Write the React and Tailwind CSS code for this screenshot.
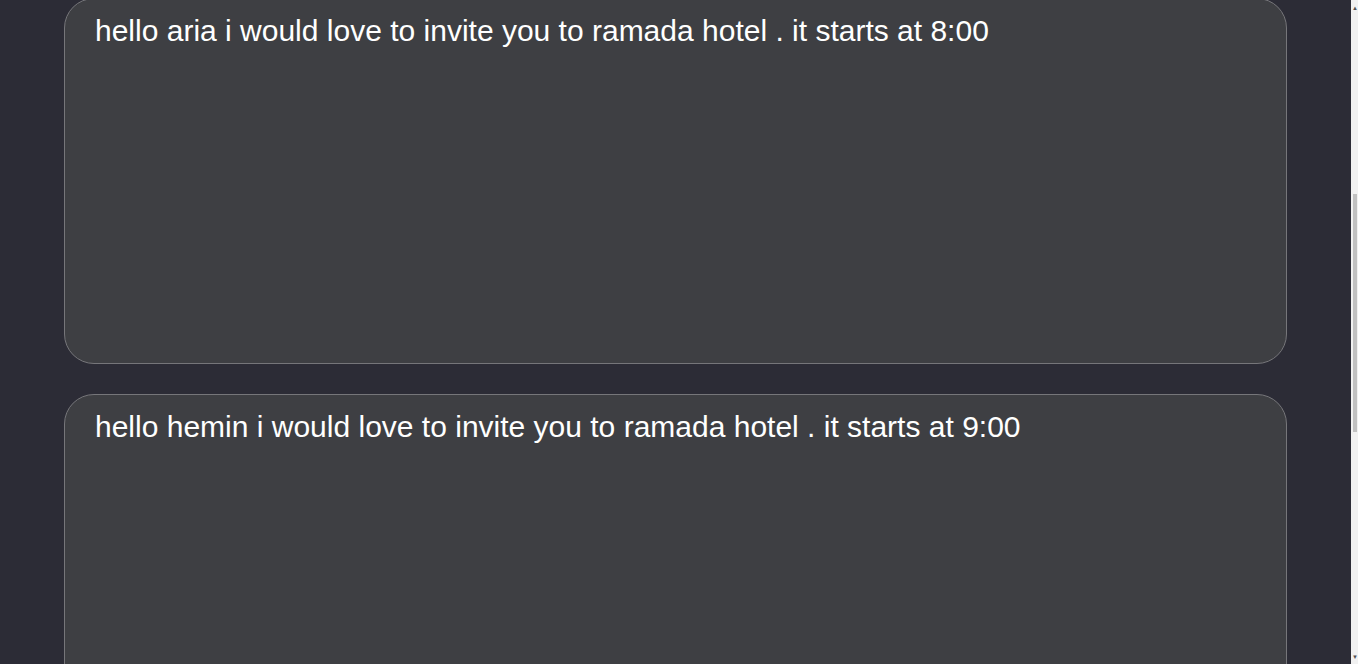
import React from 'react';

const invites = [
  { name: 'aria', time: '8:00' },
  { name: 'hemin', time: '9:00' },
];

const InviteCard = ({ name, time }) => (
  <div className="h-[366px] shrink-0 rounded-[30px] border border-[#76767a] bg-[#3e3f43] px-[30px] pt-[15px]">
    <p className="text-[30px] leading-[34px] text-white">
      hello {name} i would love to invite you to ramada hotel . it starts at {time}
    </p>
  </div>
);

export default function App() {
  return (
    <div className="flex h-[664px] w-full overflow-hidden bg-[#2c2c36] font-['Liberation_Sans',Arial,sans-serif]">
      <main className="flex w-[1351px] shrink-0 flex-col gap-[30px] px-[64px] -mt-[2px]">
        {invites.map(inv => (
          <InviteCard key={inv.name} {...inv} />
        ))}
      </main>
      {/* fake scrollbar, page is scrolled down */}
      <div className="flex w-[7px] shrink-0 flex-col bg-[#f1f1f1]">
        <div className="flex h-[15px] items-center justify-end text-[6px] leading-none text-[#505050]">▲</div>
        <div className="ml-[2px] mt-[179px] h-[238px] w-[4px] bg-[#c1c1c1]" />
        <div className="flex-1" />
        <div className="flex h-[15px] items-center justify-end text-[6px] leading-none text-[#505050]">▼</div>
      </div>
    </div>
  );
}
